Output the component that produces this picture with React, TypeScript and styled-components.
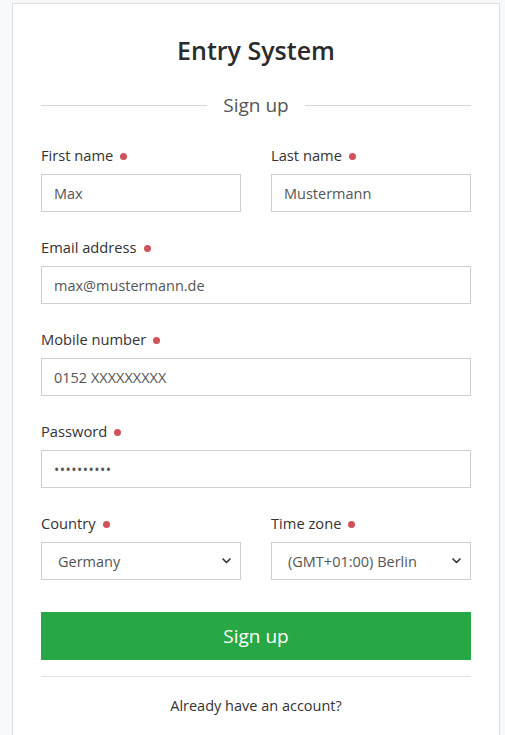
import React from "react";
import styled, { createGlobalStyle } from "styled-components";

const Global = createGlobalStyle`
  html, body { margin: 0; padding: 0; background: #f8f9fa; overflow: hidden; }
  body { font-family: "Open Sans", "Noto Sans", sans-serif; color: #333; }
  * { box-sizing: border-box; }
`;

const Page = styled.div`
  padding: 3px 5px 0 12px;
`;

const Card = styled.div`
  background: #fff;
  border: 1px solid #dcdcdc;
  border-bottom: none;
  padding: 25px 28px 18px 28px;
  min-height: 732px;
`;

const Title = styled.h1`
  margin: 0;
  text-align: center;
  font-size: 25px;
  font-weight: 600;
  line-height: 42px;
  color: #2b2b2b;
`;

const Divider = styled.div`
  display: flex;
  align-items: center;
  gap: 16px;
  margin: 20px 0 25px;
  color: #555;
  font-size: 19px;
  line-height: 28px;
  &::before, &::after {
    content: "";
    flex: 1;
    height: 1px;
    background: #d6d6d6;
  }
`;

const Row = styled.div`
  display: grid;
  grid-template-columns: 1fr 1fr;
  column-gap: 30px;
`;

const Group = styled.div<{ $mb?: number }>`
  display: flex;
  flex-direction: column;
  margin-bottom: ${(p) => p.$mb ?? 24}px;
`;

const Label = styled.label`
  font-size: 14.7px;
  line-height: 22px;
  margin-bottom: 8px;
  color: #333;
  display: flex;
  align-items: center;
`;

const Dot = styled.span`
  display: inline-block;
  width: 7px;
  height: 7px;
  border-radius: 50%;
  background: #d0525a;
  margin-left: 7px;
  margin-top: 2px;
`;

const Input = styled.input`
  height: 38px;
  width: 100%;
  border: 1px solid #cfcfcf;
  border-radius: 0;
  padding: 0 12px;
  font-family: inherit;
  font-size: 14.5px;
  color: #555;
  background: #fff;
  outline: none;
  &[type="password"] {
    letter-spacing: 0.5px;
    font-size: 14px;
  }
`;

const SelectWrap = styled.div`
  position: relative;
  height: 38px;
`;

const Select = styled.select`
  appearance: none;
  -webkit-appearance: none;
  height: 38px;
  width: 100%;
  border: 1px solid #cfcfcf;
  border-radius: 0;
  padding: 0 30px 0 16px;
  font-family: inherit;
  font-size: 14.5px;
  color: #555;
  background: #fff;
  outline: none;
`;

const Chevron = styled.svg`
  position: absolute;
  right: 10px;
  top: 16px;
  width: 9px;
  height: 6px;
  pointer-events: none;
`;

const Button = styled.button`
  display: block;
  width: 100%;
  height: 48px;
  border: none;
  border-radius: 0;
  background: #28a745;
  color: #fff;
  font-family: inherit;
  font-size: 19px;
  cursor: pointer;
  margin-top: 8px;
`;

const Rule = styled.hr`
  border: none;
  border-top: 1px solid #e2e2e2;
  margin: 16px 0 0;
`;

const Footer = styled.p`
  margin: 17px 0 0;
  text-align: center;
  font-size: 14.5px;
  line-height: 24px;
  color: #333;
`;

const Field: React.FC<{ label: string; children: React.ReactNode; mb?: number }> = ({ label, children, mb }) => (
  <Group $mb={mb}>
    <Label>
      {label}
      <Dot />
    </Label>
    {children}
  </Group>
);

const Dropdown: React.FC<{ value: string }> = ({ value }) => (
  <SelectWrap>
    <Select defaultValue={value}>
      <option>{value}</option>
    </Select>
    <Chevron viewBox="0 0 9 6">
      <path d="M1 1 L4.5 4.5 L8 1" fill="none" stroke="#3a3a3a" strokeWidth="1.7" strokeLinecap="round" strokeLinejoin="round" />
    </Chevron>
  </SelectWrap>
);

export default function App() {
  return (
    <>
      <Global />
      <Page>
        <Card>
          <Title>Entry System</Title>
          <Divider>Sign up</Divider>
          <Row>
            <Field label="First name">
              <Input defaultValue="Max" />
            </Field>
            <Field label="Last name">
              <Input defaultValue="Mustermann" />
            </Field>
          </Row>
          <Field label="Email address">
            <Input defaultValue="max@mustermann.de" />
          </Field>
          <Field label="Mobile number">
            <Input defaultValue="0152 XXXXXXXXX" />
          </Field>
          <Field label="Password">
            <Input type="password" defaultValue="0123456789" />
          </Field>
          <Row>
            <Field label="Country">
              <Dropdown value="Germany" />
            </Field>
            <Field label="Time zone">
              <Dropdown value="(GMT+01:00) Berlin" />
            </Field>
          </Row>
          <Button>Sign up</Button>
          <Rule />
          <Footer>Already have an account?</Footer>
        </Card>
      </Page>
    </>
  );
}
